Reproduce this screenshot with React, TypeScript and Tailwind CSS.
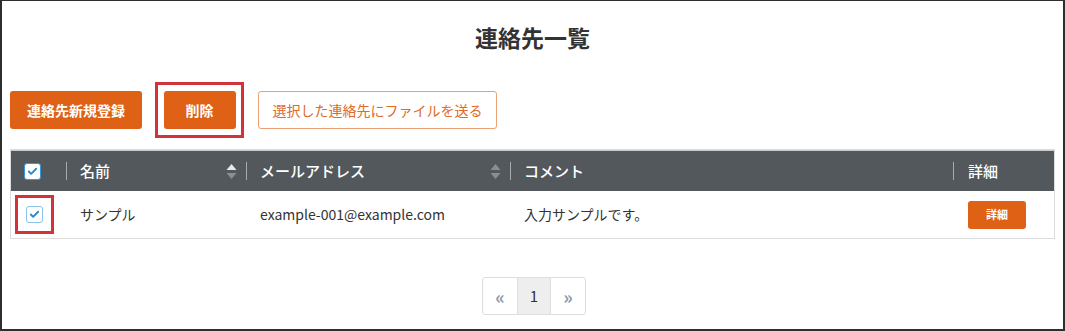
import { Check } from 'lucide-react';

const font = { fontFamily: '"Noto Sans CJK JP", "Noto Sans", sans-serif' };

function CheckBox({ header }: { header?: boolean }) {
  return (
    <span className={`flex w-[17px] h-[17px] items-center justify-center rounded-[3px] bg-white border ${header ? 'border-[#3b95d6]' : 'border-[#8cc3ea]'}`}>
      <Check className="w-[11px] h-[11px] text-[#2a86cc]" strokeWidth={4} />
    </span>
  );
}

function SortIcon({ active }: { active?: boolean }) {
  return (
    <svg width="11" height="17" viewBox="0 0 11 17" className="flex-shrink-0">
      <path d="M5.5 1 L10.5 7 H0.5 Z" fill={active ? '#e8e8e8' : '#8a8e92'} />
      <path d="M5.5 16 L10.5 10 H0.5 Z" fill="#8a8e92" />
    </svg>
  );
}

const Sep = () => <span className="w-px h-[18px] bg-[#a8abae] flex-shrink-0" />;

export default function App() {
  return (
    <div className="w-[1065px] h-[331px] bg-white border-x-2 border-t border-b-2 border-[#2e2e2e] text-[#333]" style={font}>
      <h1 className="pt-[19px] text-center text-[23px] font-bold leading-[34px] text-[#333]">連絡先一覧</h1>

      <div className="mt-[28px] ml-[8px] flex items-center h-[56px]">
        <button className="w-[132px] h-[38px] rounded-[3px] bg-[#de6116] text-white text-[14px] font-bold">連絡先新規登録</button>
        <div className="ml-[13px] w-[89px] h-[56px] border-[3px] border-[#d2333a] flex items-center justify-center">
          <button className="w-[72px] h-[38px] rounded-[3px] bg-[#de6116] text-white text-[14px] font-bold">削除</button>
        </div>
        <button className="ml-[14px] w-[239px] h-[38px] rounded-[3px] border border-[#eca077] bg-white text-[#e06a28] text-[14px]">選択した連絡先にファイルを送る</button>
      </div>

      <div className="mt-[11px] mx-[8px] border border-[#dcdcdc]">
        <div className="flex items-center h-[41px] bg-[#53585d] border-t border-[#c9cbcd] text-white text-[15px] font-medium">
          <div className="w-[55px] pl-[13px] flex items-center"><CheckBox header /></div>
          <Sep />
          <div className="w-[179px] pl-[13px] pr-[9px] flex items-center justify-between"><span>名前</span><SortIcon active /></div>
          <Sep />
          <div className="w-[263px] pl-[13px] pr-[9px] flex items-center justify-between"><span>メールアドレス</span><SortIcon /></div>
          <Sep />
          <div className="w-[442px] pl-[13px]">コメント</div>
          <Sep />
          <div className="flex-1 pl-[14px]">詳細</div>
        </div>
        <div className="flex items-center h-[47px] text-[14px] text-[#333]">
          <div className="w-[56px] pl-[4px] flex items-center">
            <div className="w-[39px] h-[39px] border-[3px] border-[#d2333a] flex items-center justify-center"><CheckBox /></div>
          </div>
          <div className="w-[180px] pl-[13px]">サンプル</div>
          <div className="w-[264px] pl-[13px]">example-001@example.com</div>
          <div className="w-[443px] pl-[13px]">入力サンプルです。</div>
          <div className="flex-1 pl-[14px]">
            <button className="w-[58px] h-[28px] rounded-[3px] bg-[#de6116] text-white text-[11px] font-bold">詳細</button>
          </div>
        </div>
      </div>

      <div className="mt-[38px] flex justify-center">
        <div className="ml-[3px] flex h-[38px] border border-[#dedede] rounded-[3px] text-[15px]">
          <span className="w-[34px] flex items-center justify-center text-[#8c9aae] text-[18px] font-bold">«</span>
          <span className="w-[34px] flex items-center justify-center bg-[#eeeeee] border-x border-[#dedede] text-[#333]">1</span>
          <span className="w-[34px] flex items-center justify-center text-[#8c9aae] text-[18px] font-bold">»</span>
        </div>
      </div>
    </div>
  );
}
